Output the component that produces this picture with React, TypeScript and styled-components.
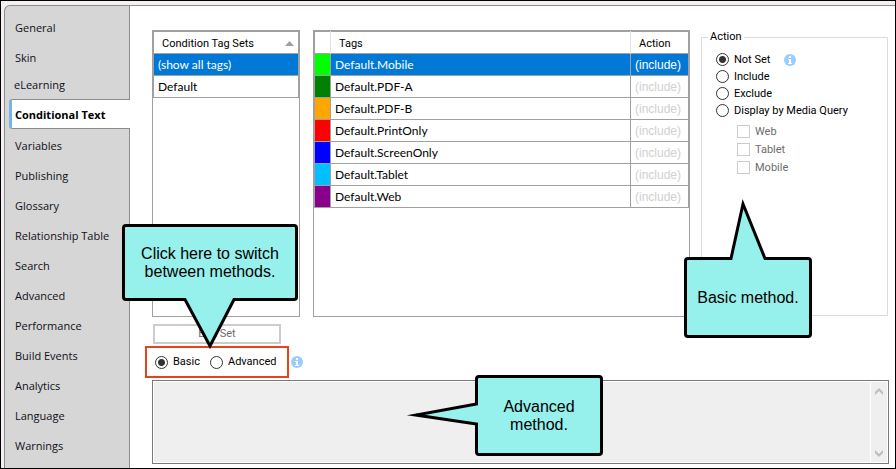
import React from "react";
import styled, { createGlobalStyle, css } from "styled-components";

const segoe = `"Open Sans", "Noto Sans", sans-serif`;
const compact = `Roboto, "Noto Sans", sans-serif`;
const arial = `"Liberation Sans", Arial, sans-serif`;

const GlobalStyle = createGlobalStyle`
  *, *::before, *::after { box-sizing: border-box; }
  body { margin: 0; background: #fff; color: #000; font: 12px/16px ${segoe}; }
`;

const Window = styled.div`
  display: flex;
  min-height: 100vh;
  border: 1px solid #000;
  background: #f3eff3;
  padding: 4px 0 0 3px;
`;

const Sidebar = styled.nav`
  flex: 0 0 126px;
  display: flex;
  flex-direction: column;
  padding: 7px 0 7px 4px;
  background: #d6d6d6;
  border: solid #8c8c8c;
  border-width: 1px 1px 0 1px;
  border-top-left-radius: 6px;
`;

const NavLink = styled.a<{ $active?: boolean; $short?: boolean }>`
  display: flex;
  align-items: center;
  height: ${(p) => (p.$short ? 24 : 30)}px;
  padding-left: ${(p) => (p.$short ? 5 : 6)}px;
  font: 11px/16px ${segoe};
  color: #101018;
  text-decoration: none;
  white-space: nowrap;
  ${(p) =>
    p.$active &&
    css`
      margin: 2px -1px 2px 0;
      padding: 2px 0 0 3px;
      background: #fff;
      border: solid #8c8c8c;
      border-width: 1px 0;
      border-left: 3px solid #74b4e8;
      border-radius: 3px 0 0 3px;
      font-weight: 700;
      color: #000;
    `}
`;

const Main = styled.main`
  flex: 1;
  min-width: 0;
  display: flex;
  flex-direction: column;
  padding: 24px 6px 4px 22px;
  background: #fff;
  border-top: 1px solid #8c8c8c;
`;

const Panels = styled.div`
  flex: 1;
  display: flex;
  gap: 13px;
`;

const SetColumn = styled.div`
  position: relative;
  flex: 0 0 148px;
  display: flex;
`;

const Details = styled.div`
  flex: 1;
  display: grid;
  grid-template-columns: minmax(0, 1fr) 188px;
  gap: 11px;
`;

const GridPanel = styled.div`
  flex: 1;
  border: 1px solid #a0a0a0;
  background: #fff;
`;

const Table = styled.table`
  width: 100%;
  border: 1px solid #a0a0a0;
  border-collapse: collapse;
  table-layout: fixed;
  font: 12px/16px Lato, ${segoe};
`;

const HeadCell = styled.th<{ $width?: number }>`
  width: ${(p) => (p.$width ? `${p.$width}px` : "auto")};
  height: 22px;
  padding: 2px 4px 0 8px;
  border-left: 1px solid #e2e2e2;
  font: 11px/16px ${compact};
  text-align: left;
  &:first-child { border-left: 1px solid #a0a0a0; }
`;

const SortHead = styled.span`
  display: flex;
  align-items: center;
  justify-content: space-between;
`;

const Row = styled.tr<{ $selected?: boolean }>`
  height: 22px;
  background: ${(p) => (p.$selected ? "#0078d7" : "#fff")};
  color: ${(p) => (p.$selected ? "#fff" : "#000")};
`;

const Cell = styled.td`
  padding: 0 4px;
  border: 1px solid #a0a0a0;
`;

const Swatch = styled.td<{ $color: string }>`
  padding: 0;
  border: 1px solid #a0a0a0;
  background: ${(p) => p.$color};
`;

const ActionCell = styled(Cell)<{ $selected?: boolean }>`
  padding-top: 1px;
  font-family: ${arial};
  color: ${(p) => (p.$selected ? "#fff" : "#d0d0d0")};
`;

const ActionColumn = styled.div`
  position: relative;
  display: flex;
`;

const ActionBox = styled.fieldset`
  flex: 1;
  min-width: 0;
  margin: 0 1px 1px 0;
  padding: 7px 0 0 14px;
  border: 1px solid #dcdcdc;
  font: 11px/14px ${compact};
`;

const Legend = styled.legend`
  margin-left: -8px;
  padding: 0 2px;
`;

const Choice = styled.label<{ $disabled?: boolean }>`
  display: flex;
  align-items: center;
  gap: 5px;
  height: 17px;
  color: ${(p) => (p.$disabled ? "#6d6d6d" : "#000")};
  font: 11px/16px ${compact};
  white-space: nowrap;
`;

const Line = styled.div`
  display: flex;
  align-items: center;
  gap: 14px;
`;

const MediaList = styled.div`
  display: flex;
  flex-direction: column;
  gap: 1px;
  padding: 4px 0 0 21px;
`;

const Radio = styled.input.attrs({ type: "radio" })`
  appearance: none;
  flex: none;
  width: 13px;
  height: 13px;
  margin: 0;
  border: 1px solid #333;
  border-radius: 50%;
  background: #fff;
  &:checked { background: radial-gradient(circle, #333 3px, #fff 4px); }
`;

const Check = styled.input.attrs({ type: "checkbox" })`
  appearance: none;
  flex: none;
  width: 13px;
  height: 13px;
  margin: 0;
  border: 1px solid #ccc;
  background: #fff;
`;

const EditButton = styled.button`
  align-self: flex-start;
  width: 128px;
  height: 20px;
  margin: 7px 0 2px 1px;
  padding: 0;
  border: 2px solid #ccc;
  background: #fff;
  color: #6d6d6d;
  font: 11px/16px ${compact};
`;

const MethodRow = styled.div`
  display: flex;
  align-items: center;
  gap: 2px;
  margin: 0 0 2px -7px;
`;

const MethodBox = styled.div`
  display: flex;
  align-items: center;
  gap: 10px;
  width: 144px;
  height: 32px;
  padding-left: 8px;
  border: 2px solid #e8421c;
`;

const QueryWrap = styled.div`
  position: relative;
  display: flex;
  height: 84px;
  padding: 1px;
  border: 1px solid #7a7a7a;
  background: #fff;
`;

const QueryText = styled.textarea`
  flex: 1;
  min-width: 0;
  border: 0;
  padding: 4px;
  resize: none;
  background: #efefef;
  overflow: hidden;
  font: 12px/16px ${segoe};
`;

const ScrollTrack = styled.div`
  flex: 0 0 17px;
  display: flex;
  flex-direction: column;
  justify-content: space-between;
  align-items: center;
  padding: 6px 0 5px;
  border-left: 1px solid #fff;
  background: #efefef;
`;

const Bubble = styled.div<{ $x: number; $y: number; $w: number; $h: number }>`
  position: absolute;
  z-index: 2;
  left: ${(p) => p.$x}px;
  top: ${(p) => p.$y}px;
  width: ${(p) => p.$w}px;
  height: ${(p) => p.$h}px;
  display: flex;
  align-items: center;
  justify-content: center;
  border: 3px solid #000;
  border-radius: 4px;
  background: #96f0ec;
  font: 16px/18px ${arial};
  text-align: center;
  white-space: pre-line;
`;

const Tail = styled.svg<{ $x: number; $y: number }>`
  position: absolute;
  left: ${(p) => p.$x}px;
  top: ${(p) => p.$y}px;
  overflow: visible;
`;

const TailFill = styled.path`
  fill: #96f0ec;
`;

const TailEdge = styled.path`
  fill: none;
  stroke: #000;
  stroke-width: 3;
  stroke-miterlimit: 12;
`;

function InfoIcon() {
  return (
    <svg width="12" height="12" viewBox="0 0 12 12" aria-label="Information">
      <circle cx="6" cy="6" r="6" fill="#99ccff" />
      <path d="M5 2h2v2H5zM4 5h3v4h1v1H4V9h1V6H4z" fill="#fff" />
    </svg>
  );
}

function Chevron({ down }: { down?: boolean }) {
  return (
    <svg width="8" height="7" viewBox="0 0 8 7" aria-hidden="true">
      <path
        d={down ? "M0 0v3L4 7l4-4V0L4 4z" : "M0 7V4L4 0l4 4v3L4 3z"}
        fill="#bdbdbd"
      />
    </svg>
  );
}

const pages = [
  "General", "Skin", "eLearning", "Conditional Text", "Variables", "Publishing",
  "Glossary", "Relationship Table", "Search", "Advanced", "Performance",
  "Build Events", "Analytics", "Language", "Warnings",
];

const tags = [
  ["Default.Mobile", "#00ff00"],
  ["Default.PDF-A", "#008000"],
  ["Default.PDF-B", "#ffa500"],
  ["Default.PrintOnly", "#ff0000"],
  ["Default.ScreenOnly", "#0000ff"],
  ["Default.Tablet", "#00bfff"],
  ["Default.Web", "#8b008b"],
];

export default function App() {
  return (
    <>
      <GlobalStyle />
      <Window>
        <Sidebar>
          {pages.map((name) => (
            <NavLink
              key={name}
              href="#"
              $active={name === "Conditional Text"}
              $short={name === "eLearning"}
            >
              {name}
            </NavLink>
          ))}
        </Sidebar>
        <Main>
          <Panels>
            <SetColumn>
              <GridPanel>
                <Table>
                  <thead>
                    <tr>
                      <HeadCell>
                        <SortHead>
                          Condition Tag Sets
                          <svg width="9" height="5" viewBox="0 0 9 5" aria-hidden="true">
                            <path d="M0 5 4.500 0 9 5z" fill="#a0a0a0" />
                          </svg>
                        </SortHead>
                      </HeadCell>
                    </tr>
                  </thead>
                  <tbody>
                    <Row $selected><Cell>(show all tags)</Cell></Row>
                    <Row><Cell>Default</Cell></Row>
                  </tbody>
                </Table>
              </GridPanel>
              <Bubble $x={-30} $y={194} $w={176} $h={77}>
                {"Click here to switch\nbetween methods."}
                <Tail $x={59} $y={71} width="54" height="54">
                  <TailFill d="M2 -1H49V2L26 49L2 2z" />
                  <TailEdge d="M0 1.500H1L26 48L50 1.500H51" />
                </Tail>
              </Bubble>
            </SetColumn>
            <Details>
              <GridPanel>
                <Table>
                  <thead>
                    <tr>
                      <HeadCell $width={16} aria-label="Color" />
                      <HeadCell>Tags</HeadCell>
                      <HeadCell $width={58}>Action</HeadCell>
                    </tr>
                  </thead>
                  <tbody>
                    {tags.map(([name, color], i) => (
                      <Row key={name} $selected={i === 0}>
                        <Swatch $color={color} />
                        <Cell>{name}</Cell>
                        <ActionCell $selected={i === 0}>(include)</ActionCell>
                      </Row>
                    ))}
                  </tbody>
                </Table>
              </GridPanel>
              <ActionColumn>
                <ActionBox>
                  <Legend>Action</Legend>
                  <Line>
                    <Choice><Radio name="action" defaultChecked />Not Set</Choice>
                    <InfoIcon />
                  </Line>
                  <Choice><Radio name="action" />Include</Choice>
                  <Choice><Radio name="action" />Exclude</Choice>
                  <Choice><Radio name="action" />Display by Media Query</Choice>
                  <MediaList>
                    <Choice $disabled><Check disabled />Web</Choice>
                    <Choice $disabled><Check disabled />Tablet</Choice>
                    <Choice $disabled><Check disabled />Mobile</Choice>
                  </MediaList>
                </ActionBox>
                <Bubble $x={-17} $y={227} $w={128} $h={81}>
                  Basic method.
                  <Tail $x={42} $y={-60} width="38" height="62">
                    <TailFill d="M2 61H36V58L14 4L2 58z" />
                    <TailEdge d="M0 58.500H2L14 4L36 58.500H37" />
                  </Tail>
                </Bubble>
              </ActionColumn>
            </Details>
          </Panels>
          <EditButton disabled>Edit Set</EditButton>
          <MethodRow>
            <MethodBox>
              <Choice><Radio name="method" defaultChecked />Basic</Choice>
              <Choice><Radio name="method" />Advanced</Choice>
            </MethodBox>
            <InfoIcon />
          </MethodRow>
          <QueryWrap>
            <QueryText aria-label="Advanced query" disabled />
            <ScrollTrack>
              <Chevron />
              <Chevron down />
            </ScrollTrack>
            <Bubble $x={322} $y={-6} $w={128} $h={81}>
              {"Advanced\nmethod."}
              <Tail $x={-70} $y={24} width="72" height="26">
                <TailFill d="M71 2V22H68L8 13L68 2z" />
                <TailEdge d="M68.500 0V2L8 13L68.500 22V24" />
              </Tail>
            </Bubble>
          </QueryWrap>
        </Main>
      </Window>
    </>
  );
}
